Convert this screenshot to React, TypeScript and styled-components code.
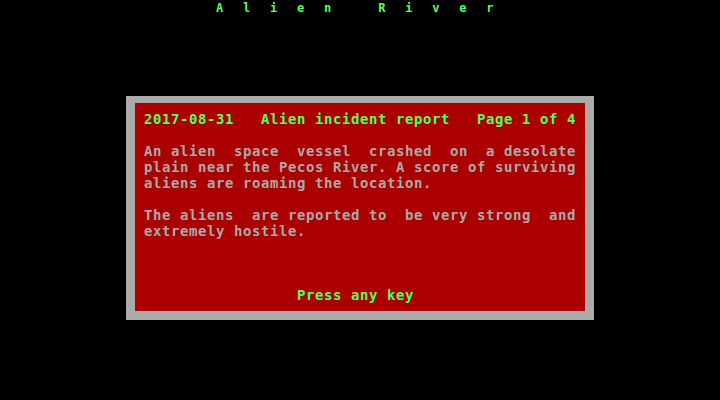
import styled, { createGlobalStyle } from "styled-components";

const GlobalStyle = createGlobalStyle`
  html, body {
    margin: 0;
    padding: 0;
    background: #000;
  }
`

// 80x25 text screen: every cell is 9px wide, 16px tall
const Screen = styled.div`
  width: 720px;
  height: 400px;
  background: #000;
  font-family: "DejaVu Sans Mono", "Liberation Mono", monospace;
  font-size: 14px;
  font-weight: bold;
  line-height: 16px;
  letter-spacing: 0.57px;
  display: flex;
  flex-direction: column;
  overflow: hidden;
`

const Title = styled.div`
  height: 16px;
  padding-left: 216px;
  color: #55ff55;
  font-size: 12px;
  letter-spacing: 19.8px;
  white-space: pre;
`

const Dialog = styled.div`
  margin: 80px 0 0 126px;
  width: 468px;
  box-sizing: border-box;
  padding: 7px 9px 9px 9px;
  background: #aaaaaa;
`

const Panel = styled.div`
  background: #aa0000;
  padding: 8px 9px 8px 9px;
`

const Line = styled.div<{ $tone?: "green" | "gray" }>`
  height: 16px;
  white-space: pre;
  color: ${p => (p.$tone === "green" ? "#55ff55" : "#aaaaaa")};
`

const body = [
  "",
  "An alien  space  vessel  crashed  on  a desolate",
  "plain near the Pecos River. A score of surviving",
  "aliens are roaming the location.",
  "",
  "The aliens  are reported to  be very strong  and",
  "extremely hostile.",
  "",
  "",
  "",
]

export default function App() {
  return (
    <>
      <GlobalStyle/>
      <Screen>
        <Title>Alien River</Title>
        <Dialog>
          <Panel>
            <Line $tone="green">2017-08-31   Alien incident report   Page 1 of 4</Line>
            {body.map((text, i) => <Line key={i}>{text}</Line>)}
            <Line $tone="green">{"                 Press any key"}</Line>
          </Panel>
        </Dialog>
      </Screen>
    </>
  )
}
